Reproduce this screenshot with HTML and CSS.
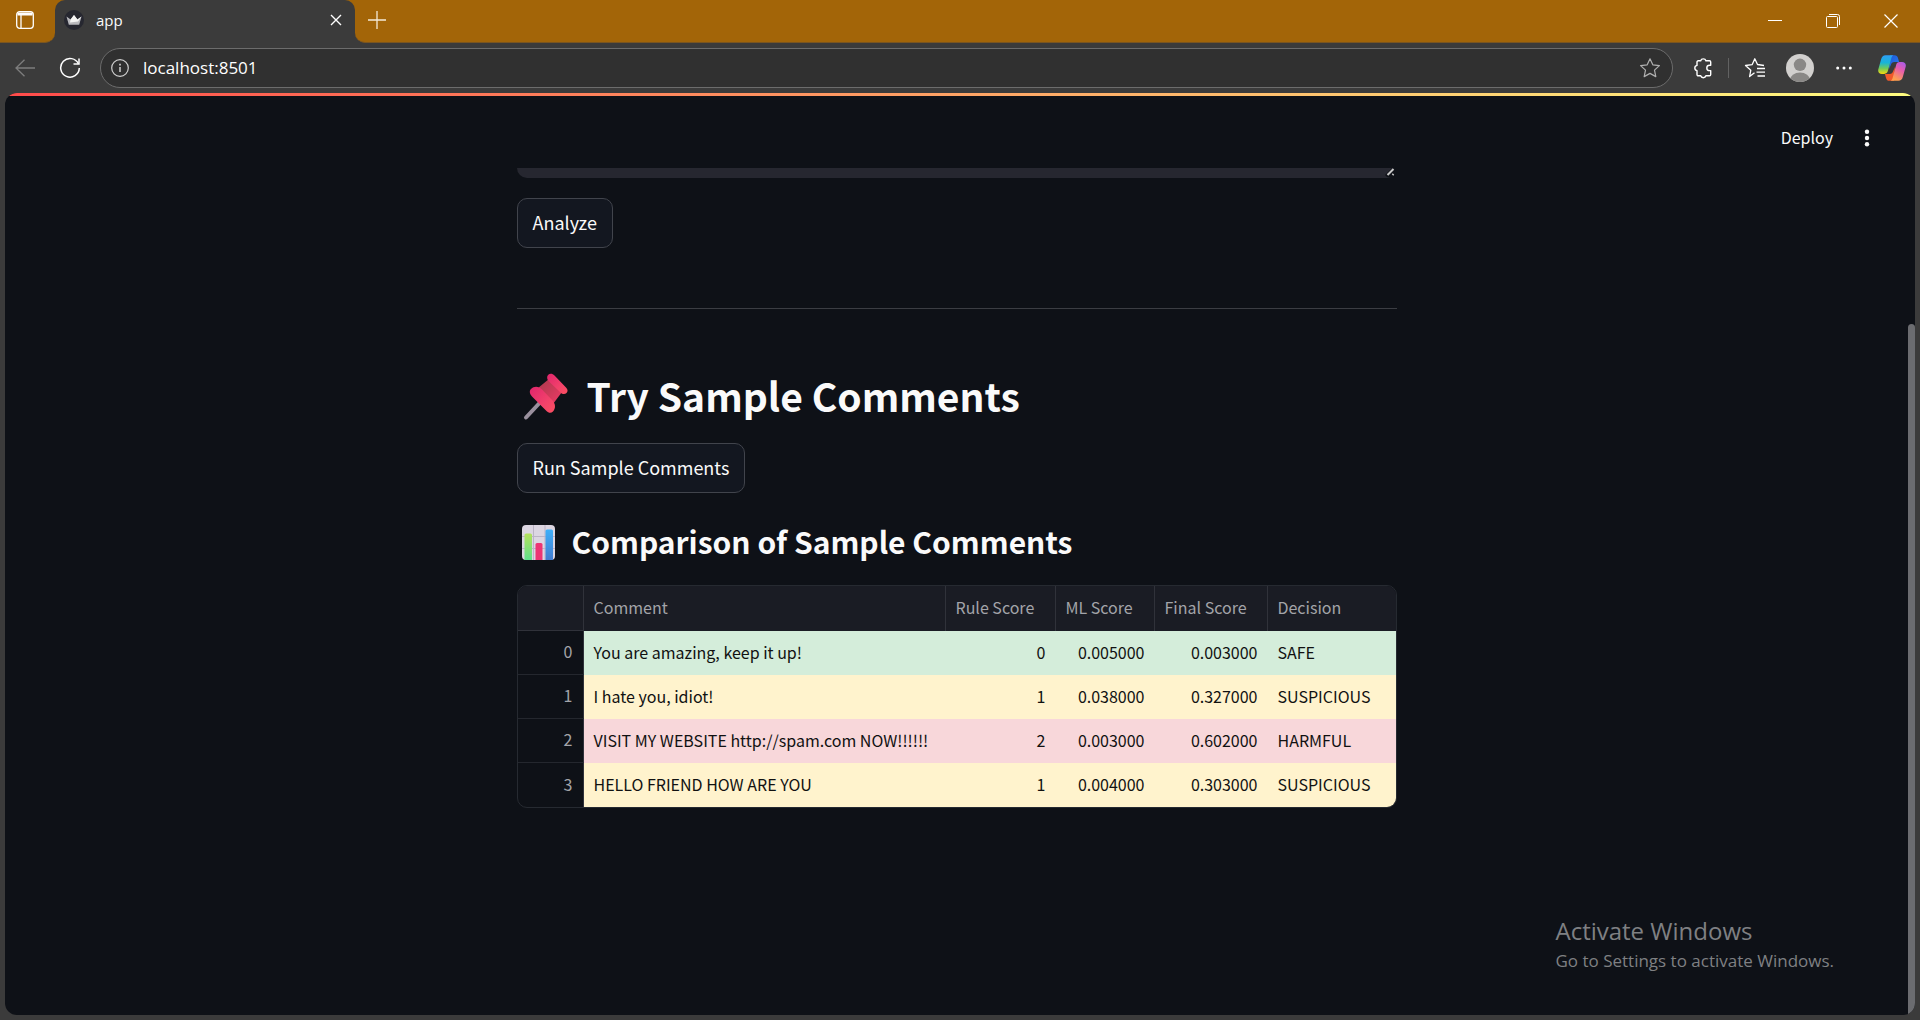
FILE: index.html
```html
<!DOCTYPE html>
<html lang="en">
<head>
<meta charset="utf-8">
<title>app</title>
<link rel="stylesheet" href="styles.css">
</head>
<body>
<div class="browser">
  <header class="tabstrip">
    <button class="tab-actions" aria-label="Tab actions">
      <svg width="20" height="20" viewBox="0 0 20 20" fill="none" stroke="#fff" stroke-width="1.3"><rect x="1.7" y="1.7" width="16.6" height="16.6" rx="3"/><path d="M2.5 4h15" stroke-width="3"/><path d="M6 5v13"/></svg>
    </button>
    <div class="tab">
      <svg class="favicon" width="20" height="20" viewBox="0 0 20 20"><circle cx="10" cy="10" r="10" fill="#262730"/><path d="M2.500 6.500 6.600 9.500 10 5l3.400 4.500 4.100-3-2.300 8.200H4.800z" fill="#b9b9bd"/><path d="M6.600 9.500 10 5l3.400 4.500 4.100-3-3.500 5-8 1z" fill="#f4f4f4"/></svg>
      <span class="tab-title">app</span>
      <button class="tab-close" aria-label="Close tab"><svg width="12" height="12" viewBox="0 0 12 12" stroke="#fff" stroke-width="1.4"><path d="M1 1l10 10M11 1L1 11"/></svg></button>
    </div>
    <button class="new-tab" aria-label="New tab"><svg width="18" height="18" viewBox="0 0 18 18" stroke="#f5ead8" stroke-width="1.3"><path d="M9 0v18M0 9h18"/></svg></button>
    <div class="window-controls">
      <button aria-label="Minimize"><svg width="14" height="14" viewBox="0 0 14 14" stroke="#fff"><path d="M0 6.500h14"/></svg></button>
      <button aria-label="Restore"><svg width="14" height="14" viewBox="0 0 14 14" fill="none" stroke="#fff"><rect x=".5" y="2.500" width="11" height="11" rx="1"/><path d="M3 .5h8.500a2 2 0 0 1 2 2V11"/></svg></button>
      <button aria-label="Close"><svg width="14" height="14" viewBox="0 0 14 14" stroke="#fff" stroke-width="1.2"><path d="M.5.5l13 13M13.500.5l-13 13"/></svg></button>
    </div>
  </header>
  <nav class="toolbar">
    <button aria-label="Back"><svg width="20" height="18" viewBox="0 0 20 18" fill="none" stroke="#7d7d7d" stroke-width="1.3"><path d="M9.500.7 1 9l8.500 8.300M1 9h19"/></svg></button>
    <button aria-label="Refresh"><svg width="22" height="22" viewBox="0 0 22 22" fill="none" stroke="#fff" stroke-width="1.5"><path d="M19.500 7A9.300 9.300 0 1 0 20.300 11"/><path d="M20 1.500V7h-5.500"/></svg></button>
    <div class="address">
      <svg width="18" height="18" viewBox="0 0 18 18" fill="none" stroke="#d0d0d0" stroke-width="1.2"><circle cx="9" cy="9" r="8.300"/><path d="M9 8v5" stroke-width="1.5"/><path d="M9 4.800v1.700" stroke-width="1.700"/></svg>
      <input class="url" type="text" value="localhost:8501" aria-label="Address">
      <button class="favorite" aria-label="Add to favorites"><svg width="22" height="22" viewBox="0 0 22 22" fill="none" stroke="#b0b0b0" stroke-width="1.2" stroke-linejoin="round"><path d="m11 1.800 2.800 6 6.600.8-4.900 4.500 1.300 6.500-5.800-3.200-5.800 3.200 1.300-6.500L1.600 8.600l6.600-.8z"/></svg></button>
    </div>
    <button class="tool-extensions" aria-label="Extensions"><svg width="20" height="22" viewBox="0 0 20 22" fill="none" stroke="#fff" stroke-width="1.4" stroke-linejoin="round"><path d="M5.200 3.800H7.700a2.700 2.700 0 0 1 5.200 0h3.600a1.200 1.200 0 0 1 1.200 1.200v3.200h-1.200a2.700 2.700 0 0 0 0 5.400h1.200v4a1.200 1.200 0 0 1-1.200 1.200h-3.600a2.700 2.700 0 0 1-5.200 0H5.200A1.200 1.200 0 0 1 4 17.600v-3.900a2.700 2.700 0 0 1 0-5.300V5a1.200 1.200 0 0 1 1.200-1.200z"/></svg></button>
    <span class="divider"></span>
    <button class="tool-favorites" aria-label="Favorites"><svg width="22" height="22" viewBox="0 0 22 22" fill="none" stroke="#fff" stroke-width="1.300" stroke-linejoin="round"><path d="M10.500 15.800 5.600 19.600l1.200-6.400L1.500 8.500l6.600-.8L10.800 1.800l2.700 5.700 6.500 1M13 11.500h8M12.500 15.200H21M13.500 19H21"/></svg></button>
    <button class="tool-profile" aria-label="Profile"><svg width="28" height="28" viewBox="0 0 28 28"><defs><clipPath id="face"><circle cx="14" cy="14" r="14"/></clipPath></defs><g clip-path="url(#face)"><path fill="#d2d0ce" d="M0 0h28v28H0z"/><circle cx="14" cy="10.800" r="6.200" fill="#8a8886"/><ellipse cx="14" cy="26" rx="10" ry="7.500" fill="#8a8886"/></g></svg></button>
    <button class="tool-more" aria-label="Settings and more"><svg width="16" height="4" viewBox="0 0 16 4" fill="#fff"><circle cx="1.700" cy="2" r="1.500"/><circle cx="8" cy="2" r="1.500"/><circle cx="14.300" cy="2" r="1.500"/></svg></button>
    <button class="tool-copilot" aria-label="Copilot"><svg width="28" height="26" viewBox="0 0 28 26"><defs>
      <linearGradient id="c1" x1="0" y1="0" x2="0" y2="1"><stop offset="0" stop-color="#2f9df4"/><stop offset=".4" stop-color="#18b4d8"/><stop offset=".7" stop-color="#6fca5a"/><stop offset="1" stop-color="#f5d80f"/></linearGradient>
      <linearGradient id="c2" x1="1" y1="0" x2=".5" y2="1"><stop offset="0" stop-color="#a05cf0"/><stop offset=".45" stop-color="#e65bb0"/><stop offset="1" stop-color="#ffa050"/></linearGradient>
      <linearGradient id="c3" x1="0" y1="0" x2="1" y2="1"><stop offset="0" stop-color="#1c58d8"/><stop offset="1" stop-color="#2a7cf0"/></linearGradient></defs>
      <path fill="url(#c3)" d="M12 .2h4.600c1.900 0 2.800 1 3.300 2.600l1.200 4.300h-4.700c-2 0-3 1-3.600 3L11 14z"/>
      <path fill="#f0592b" d="M16 25.800h-4.600c-1.900 0-2.800-1-3.300-2.600l-1.200-4.300h4.700c2 0 3-1 3.600-3L17 12z"/>
      <path fill="url(#c1)" d="M7.500.2h8c-1.300.6-1.800 1.600-2.200 3L10 15.600c-.6 2.200-1.700 3.300-3.800 3.300H4c-3 0-4.400-2-3.600-5L3.200 4C3.900 1.500 5.300.2 7.500.2z"/>
      <path fill="url(#c2)" d="M20.500 25.800h-8c1.300-.6 1.800-1.600 2.200-3L18 10.400c.6-2.200 1.700-3.300 3.800-3.300H24c3 0 4.400 2 3.600 5L24.800 22c-.7 2.500-2.100 3.800-4.300 3.800z"/></svg></button>
  </nav>
  <div class="viewport">
    <div class="decoration"></div>
    <header class="app-header">
      <button class="deploy">Deploy</button>
      <button class="app-menu" aria-label="Main menu"><svg width="6" height="18" viewBox="0 0 6 18" fill="#fafafa"><circle cx="3" cy="2.800" r="2.200"/><circle cx="3" cy="9" r="2.200"/><circle cx="3" cy="15.200" r="2.200"/></svg></button>
    </header>
    <div class="scroll-area">
      <main class="content">
        <div class="comment-box">
          <textarea class="comment-input" aria-label="Comment"></textarea>
          <svg class="grip" width="12" height="9" viewBox="0 0 12 9"><path d="M0 7 7 0h5v3a6 6 0 0 1-6 6H2z" fill="#0e1117"/><path d="M2.500 7 8.500 1M7.500 7l1-1" stroke="#c8c8c8" stroke-width="2"/></svg>
        </div>
        <button class="btn">Analyze</button>
        <hr class="rule">
        <h2 class="title">
          <svg width="60" height="50" viewBox="0 0 60 50" aria-hidden="true"><defs><linearGradient id="p1" x1="0" y1="0" x2="1" y2="1"><stop offset="0" stop-color="#e0256c"/><stop offset=".6" stop-color="#f2416b"/><stop offset="1" stop-color="#fb5060"/></linearGradient><linearGradient id="p2" x1="0" y1="0" x2="1" y2="1"><stop offset="0" stop-color="#a83a4c"/><stop offset="1" stop-color="#f03a66"/></linearGradient></defs>
            <path d="M9 45.500 23 30.500" stroke="#9a909e" stroke-width="4" stroke-linecap="round"/>
            <path d="M21 16 32 7 45 20 36 32z" fill="url(#p2)"/>
            <path d="M14 17c3-3 7.500-3 11 .5l10.500 11c3 3.500 3.500 7.500.5 11-2 2-4.500 1.500-6.500-.5L15 24.500c-2-2.300-3.200-5.300-1-7.500z" fill="url(#p1)"/>
            <path d="M31 3c2-2 4.500-1.500 6.500.5l11.500 12c2 2 2 4 .5 5.500s-4 1.500-6-.5L32 9.500C30 7.500 29.500 4.700 31 3z" fill="url(#p1)"/></svg>
          <span>Try Sample Comments</span>
        </h2>
        <button class="btn">Run Sample Comments</button>
        <h3 class="subtitle">
          <svg width="45" height="36" viewBox="0 0 45 36" aria-hidden="true"><defs><linearGradient id="g1" x1="0" y1="0" x2="0" y2="1"><stop offset="0" stop-color="#b4e05c"/><stop offset="1" stop-color="#5fe08c"/></linearGradient><linearGradient id="g2" x1="0" y1="0" x2="0" y2="1"><stop offset="0" stop-color="#3fb0fa"/><stop offset="1" stop-color="#427cd0"/></linearGradient></defs>
            <rect x="5" y="0" width="33" height="35" rx="4" fill="#dcd6e2"/><path d="M16.500 0v35M28 0v35M5 11.500h33M5 23.500h33" stroke="#bcb4c6"/>
            <path d="M7.500 35V10A1.500 1.500 0 0 1 9 8.500h4.500A1.500 1.500 0 0 1 15 10v25z" fill="url(#g1)"/><path d="M18.500 35V19.500A1.500 1.500 0 0 1 20 18h4a1.500 1.500 0 0 1 1.500 1.500V35z" fill="#ec3574"/><path d="M28.500 35V6A1.500 1.500 0 0 1 30 4.500h4.500A1.500 1.500 0 0 1 36 6v29z" fill="url(#g2)"/></svg>
          <span>Comparison of Sample Comments</span>
        </h3>
        <div class="table-frame">
          <table class="scores">
            <colgroup><col class="c-index"><col class="c-comment"><col class="c-rule"><col class="c-ml"><col class="c-final"><col class="c-decision"></colgroup>
            <thead><tr><td></td><th scope="col">Comment</th><th scope="col">Rule Score</th><th scope="col">ML Score</th><th scope="col">Final Score</th><th scope="col">Decision</th></tr></thead>
            <tbody>
              <tr class="safe"><th scope="row">0</th><td>You are amazing, keep it up!</td><td class="num">0</td><td class="num">0.005000</td><td class="num">0.003000</td><td>SAFE</td></tr>
              <tr class="suspicious"><th scope="row">1</th><td>I hate you, idiot!</td><td class="num">1</td><td class="num">0.038000</td><td class="num">0.327000</td><td>SUSPICIOUS</td></tr>
              <tr class="harmful"><th scope="row">2</th><td>VISIT MY WEBSITE http://spam.com NOW!!!!!!</td><td class="num">2</td><td class="num">0.003000</td><td class="num">0.602000</td><td>HARMFUL</td></tr>
              <tr class="suspicious"><th scope="row">3</th><td>HELLO FRIEND HOW ARE YOU</td><td class="num">1</td><td class="num">0.004000</td><td class="num">0.303000</td><td>SUSPICIOUS</td></tr>
            </tbody>
          </table>
        </div>
      </main>
    </div>
    <div class="scroll-thumb"></div>
    <aside class="activation">
      <p class="activation-title">Activate Windows</p>
      <p class="activation-text">Go to Settings to activate Windows.</p>
    </aside>
  </div>
</div>
</body>
</html>
```

FILE: styles.css
```css
* { box-sizing: border-box; }

body {
  margin: 0;
  background: #3b3b3b;
  color: #fafafa;
  font-family: "Noto Sans CJK SC", "Open Sans", sans-serif;
}

button {
  padding: 0;
  border: 0;
  background: none;
  color: inherit;
  font: inherit;
  display: flex;
  align-items: center;
  justify-content: center;
}

svg { display: block; flex: none; }

.browser {
  min-height: 100vh;
  display: flex;
  flex-direction: column;
}

/* Tab strip */
.tabstrip {
  height: 43px;
  display: flex;
  background: linear-gradient(90deg, #3b3b3b 50%, #a36508 50%);
}

.tab-actions {
  width: 55px;
  padding: 0 5px 2px 0;
  background: #a36508;
  border-bottom: 1px solid #7a5520;
  border-radius: 0 0 10px 0;
}

.tab {
  width: 300px;
  padding: 0 13px 3px 9px;
  display: flex;
  align-items: center;
  gap: 12px;
  background: linear-gradient(#3b3b3b, #3b3b3b) padding-box, #a36508;
  background: #3b3b3b;
  border-radius: 10px 10px 0 0;
  box-shadow: 0 -10px 0 10px #a36508;
  clip-path: inset(0);
  font: 15px/20px "Open Sans", sans-serif;
}

.tab-title { flex: 1; }

.new-tab {
  width: 44px;
  padding: 0 0 3px;
}

.new-tab, .window-controls {
  background: #a36508;
  border-bottom: 1px solid #7a5520;
}

.new-tab { border-radius: 0 0 0 10px; }

.window-controls {
  flex: 1;
  display: flex;
  justify-content: flex-end;
}

.window-controls button { width: 58px; }

/* Toolbar */
.toolbar {
  height: 50px;
  padding: 0 14px 1px 15px;
  display: flex;
  align-items: center;
}

.toolbar button:nth-of-type(2) { margin-left: 24px; }

.address {
  flex: 1;
  height: 40px;
  margin: 0 20px 0 19px;
  padding: 0 11px 0 10px;
  display: flex;
  align-items: center;
  gap: 14px;
  background: #303030;
  border: 1px solid #6c6c6c;
  border-radius: 20px;
}

.url {
  flex: 1;
  padding: 0;
  border: 0;
  background: none;
  color: #fff;
  font: 17px/24px "Open Sans", sans-serif;
}

.divider {
  width: 1px;
  height: 20px;
  margin: 0 15px;
  background: #626262;
}

.tool-profile { margin: 0 22px 0 20px; }

.tool-copilot { margin-left: 26px; }

/* Page area */
.viewport {
  position: relative;
  flex: 1;
  margin: 0 5px 5px;
  overflow: hidden;
  background: #0e1117;
  border-radius: 12px;
}

.decoration {
  height: 3px;
  background: linear-gradient(90deg, #ff4b4b, #fffd80);
}

.app-header {
  height: 72px;
  padding: 12px 45px 0 0;
  display: flex;
  justify-content: flex-end;
  gap: 31px;
  font-size: 16px;
}

.deploy, .app-menu { height: 60px; }

.deploy { padding-bottom: 2px; }

/* Leaves room for the scrollbar */
.scroll-area { padding-right: 7px; }

.content {
  width: 880px;
  max-width: 100%;
  margin: 0 auto;
}

.comment-box {
  position: relative;
  height: 10px;
  margin-bottom: 20px;
}

.comment-input {
  display: block;
  width: 100%;
  height: 10px;
  padding: 0;
  border: 0;
  border-radius: 0 0 10px 10px;
  background: #262730;
  resize: none;
  overflow: hidden;
}

.grip { position: absolute; right: 0; top: 0; }

.btn {
  height: 50px;
  padding: 0 15px 2px;
  background: #131720;
  border: 1px solid #41444c;
  border-radius: 10px;
  font-size: 18px;
  line-height: 32px;
}

.rule {
  height: 1px;
  margin: 60px 0 54px;
  border: 0;
  background: #3b3d43;
}

.title, .subtitle {
  margin: 0;
  display: flex;
  align-items: center;
  font-weight: 700;
}

.title {
  height: 68px;
  margin-bottom: 12px;
  gap: 10px;
  font-size: 39px;
}

.subtitle {
  height: 52px;
  margin: 24px 0 16px;
  gap: 10px;
  font-size: 30px;
}

.title span, .subtitle span { padding-bottom: 4px; }

/* Score table */
.table-frame {
  overflow: hidden;
  border: 1px solid #262a31;
  border-radius: 10px;
}

.scores {
  width: 100%;
  table-layout: fixed;
  border-collapse: separate;
  border-spacing: 0;
  font-size: 16px;
  line-height: 24px;
}

.c-index { width: 66px; }
.c-comment { width: 362px; }
.c-rule { width: 110px; }
.c-ml { width: 99px; }
.c-final { width: 113px; }

.scores th, .scores td {
  height: 44px;
  padding: 0 10px 3px;
  text-align: left;
  font-weight: 400;
  white-space: nowrap;
}

.scores thead th, .scores thead td {
  height: 45px;
  background: #1a1c24;
  border-right: 1px solid #30323a;
  border-bottom: 1px solid #30323a;
  color: #a3a4a9;
}

.scores thead th:last-child { border-right: 0; }

.scores tbody th {
  border-right: 1px solid #30323a;
  border-bottom: 1px solid #24272e;
  color: #a3a4a9;
  text-align: right;
}

.scores tbody td { color: #111; }

.scores tbody .num { text-align: right; }

.scores tr:last-child th { border-bottom: 0; }

.scores .safe td { background: #d4edda; }
.scores .suspicious td { background: #fff3cd; }
.scores .harmful td { background: #f8d7da; }

.scroll-thumb {
  position: absolute;
  right: 0;
  top: 25%;
  bottom: 0;
  width: 7px;
  border-radius: 4px 4px 0 0;
  background: #6b6c70;
}

/* System notice laid over the page */
.activation {
  position: absolute;
  right: 81px;
  bottom: 40px;
  color: #7f8083;
  font-family: "Open Sans", sans-serif;
}

.activation p { margin: 0; }
.activation-title { font-size: 24px; line-height: 32px; }
.activation-text { font-size: 17px; line-height: 28px; }
```
